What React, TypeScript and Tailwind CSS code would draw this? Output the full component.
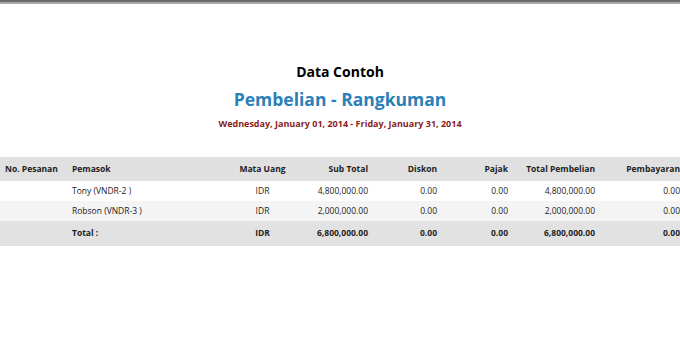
const cols = "grid grid-cols-[66px_164px_65px_80px_69px_71px_87px_78px]";

const rows = [
  { pemasok: "Tony (VNDR-2 )", sub: "4,800,000.00", total: "4,800,000.00" },
  { pemasok: "Robson (VNDR-3 )", sub: "2,000,000.00", total: "2,000,000.00" },
];

export default function App() {
  return (
    <div className="h-[350px] w-[680px] overflow-hidden bg-white font-['Open_Sans',sans-serif]">
      <div className="h-[2px] bg-[#6a6a6a]" />
      <div className="h-[2px] bg-[#a9a9a9]" />

      <div className="mt-[59px] text-center">
        <div className="text-[14px] font-bold leading-[18px] text-black">Data Contoh</div>
        <div className="mt-[6px] text-[17.5px] font-bold leading-[24px] text-[#2a80b9]">
          Pembelian - Rangkuman
        </div>
        <div className="mt-[7px] text-[9px] font-bold leading-[12px] text-[#8b1c1c]">
          Wednesday, January 01, 2014 - Friday, January 31, 2014
        </div>
      </div>

      <div className="mt-[27px] w-[680px] text-[8.5px] text-[#222]">
        <div className={`${cols} h-[24px] items-center bg-[#e0e0e0] font-bold`}>
          <div className="pl-[5px]">No. Pesanan</div>
          <div className="pl-[6px]">Pemasok</div>
          <div className="text-center">Mata Uang</div>
          <div className="pr-[7px] text-right">Sub Total</div>
          <div className="pr-[7px] text-right">Diskon</div>
          <div className="pr-[7px] text-right">Pajak</div>
          <div className="pr-[7px] text-right">Total Pembelian</div>
          <div className="text-right">Pembayaran</div>
        </div>

        {rows.map((r, i) => (
          <div
            key={r.pemasok}
            className={`${cols} h-[20px] items-center ${i % 2 === 1 ? "bg-[#f4f4f4]" : "bg-white"}`}
          >
            <div />
            <div className="pl-[6px]">{r.pemasok}</div>
            <div className="text-center">IDR</div>
            <div className="pr-[7px] text-right">{r.sub}</div>
            <div className="pr-[7px] text-right">0.00</div>
            <div className="pr-[7px] text-right">0.00</div>
            <div className="pr-[7px] text-right">{r.total}</div>
            <div className="text-right">0.00</div>
          </div>
        ))}

        <div className={`${cols} h-[25px] items-center bg-[#e2e2e2] font-bold`}>
          <div />
          <div className="pl-[6px]">Total :</div>
          <div className="text-center">IDR</div>
          <div className="pr-[7px] text-right">6,800,000.00</div>
          <div className="pr-[7px] text-right">0.00</div>
          <div className="pr-[7px] text-right">0.00</div>
          <div className="pr-[7px] text-right">6,800,000.00</div>
          <div className="text-right">0.00</div>
        </div>
      </div>
    </div>
  );
}
